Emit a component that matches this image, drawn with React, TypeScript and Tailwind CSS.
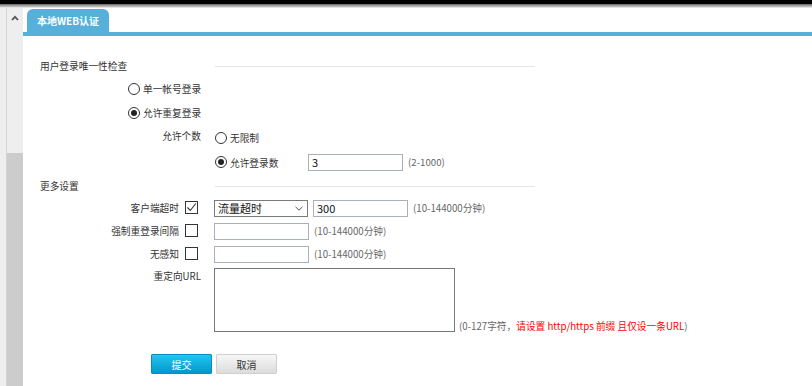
import React from 'react';

const font = { fontFamily: '"Noto Sans CJK SC", "Microsoft YaHei", sans-serif' };

const Radio = ({ checked }: { checked?: boolean }) => (
  <span className="inline-flex w-[12px] h-[12px] rounded-full border border-[#333] bg-white items-center justify-center shrink-0">
    {checked && <span className="w-[6px] h-[6px] rounded-full bg-[#222]" />}
  </span>
);

const Check = ({ checked }: { checked?: boolean }) => (
  <span className="inline-flex w-[13px] h-[13px] border border-[#333] bg-white items-center justify-center shrink-0">
    {checked && (
      <svg width="11" height="11" viewBox="0 0 11 11">
        <path d="M1.5 5.5 L4.3 8.5 L9.8 1.5" fill="none" stroke="#333" strokeWidth="1.1" />
      </svg>
    )}
  </span>
);

const SectionHeader = ({ title }: { title: string }) => (
  <div className="flex items-center h-[20px]">
    <div className="w-[192px] pl-[17px] text-[#333]">{title}</div>
    <div className="w-[320px] h-[1px] bg-[#e6e6e6]" />
  </div>
);

const Hint = ({ children }: { children: React.ReactNode }) => (
  <span className="text-[#666] ml-[5px]">{children}</span>
);

const CheckRow = ({ label, checked, children }: { label: string; checked?: boolean; children: React.ReactNode }) => (
  <div className="flex items-center h-[22px] mt-[1px]">
    <div className="w-[178px] pr-[3px] flex items-center justify-end gap-[6px] text-[#333]">
      <span>{label}</span>
      <Check checked={checked} />
    </div>
    <div className="ml-[13px] flex items-center">{children}</div>
  </div>
);

const TextInput = ({ value, w = 'w-[95px]' }: { value?: string; w?: string }) => (
  <div className={`${w} h-[17px] border border-[#aab0bb] bg-white flex items-center px-[3px] text-[11px] text-[#111]`}>
    {value}
  </div>
);

export default function App() {
  return (
    <div className="w-[812px] h-[386px] overflow-hidden bg-white flex flex-col text-[9.7px]" style={font}>
      <div className="h-[4px] bg-black" />
      <div className="h-[4px] bg-gradient-to-b from-[#666] to-[#f4f4f4]" />
      <div className="flex flex-1">
        {/* left frame + scrollbar */}
        <div className="w-[6px] bg-[#eeeeee]" />
        <div className="w-[1px] bg-[#d4d4d4]" />
        <div className="w-[16px] bg-[#eeeeee] flex flex-col">
          <div className="h-[145px] flex justify-center pt-[7px]">
            <svg width="8" height="6" viewBox="0 0 8 6">
              <path d="M1 5 L4 1.8 L7 5" fill="none" stroke="#555" strokeWidth="1.8" />
            </svg>
          </div>
          <div className="flex-1 bg-[#cccccc]" />
        </div>

        {/* main */}
        <div className="flex-1 flex flex-col">
          <div className="pt-[1px] pl-[4px] flex">
            <div className="w-[82px] h-[23px] rounded-t-[6px] bg-[#56b0d9] text-white font-bold text-[10px] flex items-center justify-center">
              本地WEB认证
            </div>
          </div>
          <div className="h-[4px] bg-[#56b0d9]" />

          <div className="pt-[20px]">
            <SectionHeader title="用户登录唯一性检查" />
            <div className="mt-[1px] h-[24px] pl-[105px] flex items-center gap-[3px] text-[#333]">
              <Radio />
              <span>单一帐号登录</span>
            </div>
            <div className="h-[24px] pl-[105px] flex items-center gap-[3px] text-[#333]">
              <Radio checked />
              <span>允许重复登录</span>
            </div>
            <div className="h-[26px] flex items-center text-[#333]">
              <div className="w-[178px] text-right -mt-[3px]">允许个数</div>
              <div className="ml-[14px] flex items-center gap-[3px]">
                <Radio />
                <span>无限制</span>
              </div>
            </div>
            <div className="h-[22px] flex items-center text-[#333]">
              <div className="w-[178px]" />
              <div className="ml-[14px] flex items-center gap-[3px]">
                <Radio checked />
                <span className="w-[78px] mt-[3px]">允许登录数</span>
              </div>
              <TextInput value="3" />
              <Hint>(2-1000)</Hint>
            </div>

            <div className="mt-[3px]">
              <SectionHeader title="更多设置" />
            </div>

            <CheckRow label="客户端超时" checked>
              <div className="w-[94px] h-[17px] border border-[#7a7a7a] bg-white flex items-center justify-between pl-[3px] pr-[4px] text-[11px] text-[#111]">
                <span>流量超时</span>
                <svg width="8" height="5" viewBox="0 0 8 5">
                  <path d="M0.5 0.8 L4 4.2 L7.5 0.8" fill="none" stroke="#555" strokeWidth="1" />
                </svg>
              </div>
              <div className="ml-[5px]">
                <TextInput value="300" />
              </div>
              <Hint>(10-144000分钟)</Hint>
            </CheckRow>
            <CheckRow label="强制重登录间隔">
              <TextInput />
              <Hint>(10-144000分钟)</Hint>
            </CheckRow>
            <CheckRow label="无感知">
              <TextInput />
              <Hint>(10-144000分钟)</Hint>
            </CheckRow>

            <div className="flex mt-[3px]">
              <div className="w-[178px] text-right text-[#333] pt-[1px]">重定向URL</div>
              <div className="ml-[13px] flex items-end">
                <div className="w-[241px] h-[64px] border border-[#777] bg-white" />
                <span className="text-[#666] ml-[4px] -mb-[2px]">
                  (0-127字符，<span className="text-[#ff0000]">请设置 http/https 前缀 且仅设一条URL</span>)
                </span>
              </div>
            </div>

            <div className="flex gap-[4px] pl-[128px] mt-[22px]">
              <button className="w-[61px] h-[20px] border border-[#0a8ec2] bg-gradient-to-b from-[#22c6ee] to-[#0098cc] text-white text-[10px] rounded-[1px]">
                提交
              </button>
              <button className="w-[61px] h-[20px] border border-[#cfcfcf] bg-gradient-to-b from-[#f7f7f7] to-[#dcdcdc] text-[#333] text-[10px] rounded-[1px]">
                取消
              </button>
            </div>
          </div>
        </div>
      </div>
    </div>
  );
}
